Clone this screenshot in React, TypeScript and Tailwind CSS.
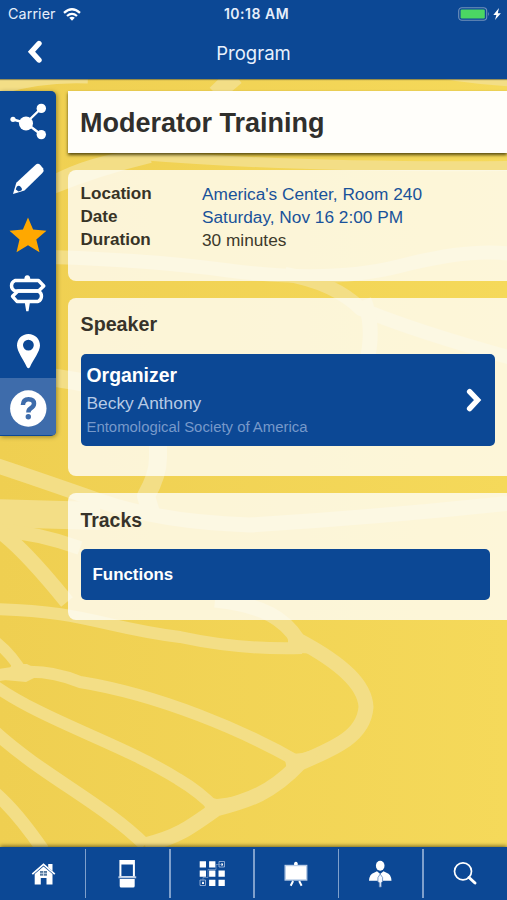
import type { ReactNode } from "react";

const details = [
  { label: "Location", value: "America's Center, Room 240", link: true },
  { label: "Date", value: "Saturday, Nov 16 2:00 PM", link: true },
  { label: "Duration", value: "30 minutes", link: false },
];

function WingBackground() {
  return (
    <svg className="absolute inset-0" width="507" height="900" viewBox="0 0 507 900" aria-hidden="true">
      <defs>
        <linearGradient id="gold" x1="0" y1="0" x2="1" y2="0">
          <stop offset="0" stopColor="#efcf51" />
          <stop offset="1" stopColor="#f5d95a" />
        </linearGradient>
      </defs>
      <rect width="507" height="900" fill="url(#gold)" />
      <g fill="none" stroke="#f3de86" strokeLinejoin="round">
        {/* upper wing */}
        <path d="M-5 88 Q40 74 88 76" strokeWidth="15" />
        <path d="M216 94 Q226 84 236 76" strokeWidth="18" />
        <path d="M415 70 Q460 80 512 83" strokeWidth="7" />
        <path d="M50 182 Q90 160 140 155 Q300 168 512 166" strokeWidth="10" />
        <path d="M50 188 Q100 168 150 156" strokeWidth="14" />
        <path d="M50 257 Q150 260 225 270 Q330 284 400 266 T512 254" strokeWidth="14" />
        <path d="M285 274 Q335 283 361 309 Q420 333 512 358" strokeWidth="14" />
        <path d="M364 300 Q374 325 368 356" strokeWidth="15" />
        <path d="M50 377 Q100 384 158 400" strokeWidth="18" />
        <path d="M158 400 V458 Q158 475 146 496 L152 516" strokeWidth="18" />
        {/* lower wing */}
        <path d="M-5 465 Q40 480 100 501 Q160 522 250 525 Q380 517 512 503" strokeWidth="15" />
        <path d="M-5 513 L100 516" strokeWidth="28" />
        <path d="M-5 530 Q35 532 80 548" strokeWidth="14" />
        <path d="M-5 528 Q20 544 67 602" strokeWidth="15" />
        <path d="M-5 609 C85 611 105 628 180 637 Q240 650 302 648" strokeWidth="12" />
        <path d="M215 600 C265 605 285 620 298 640 C345 665 365 686 366 707 C364 736 335 748 300 763 C272 793 248 801 216 809 C188 829 177 837 145 845" strokeWidth="15" />
        <path d="M-5 641 Q13 655 25 677" strokeWidth="11" />
        <path d="M-5 676 Q40 665 80 682 C160 695 245 731 300 763" strokeWidth="12" />
        <path d="M-5 686 C45 721 122 744 178 779 Q200 792 216 809" strokeWidth="12" />
        <path d="M-5 732 C42 775 104 804 145 845" strokeWidth="13" />
        <path d="M-5 793 Q17 812 43 850" strokeWidth="13" />
      </g>
      <path d="M283 755 L302 753 L322 747 L311 765 L292 774 L286 778 Q288 766 283 755 Z M200 795 L217 799 L240 796 L226 811 L203 815 Q208 807 200 795 Z M280 624 L304 640 L318 654 L282 652 Q295 642 280 624 Z M12 664 L27 664 L44 673 L26 682 L4 680 Z" fill="#f3de86" />
    </svg>
  );
}

function StatusBar() {
  return (
    <div className="grid h-[27px] grid-cols-3 items-center pr-1.5 pl-2 text-[14.3px] text-[#e6eefb]">
      <div className="flex items-center gap-[7px] pt-px">
        <span className="tracking-[0.1px]">Carrier</span>
        <svg width="18" height="13" viewBox="0 0 18 13" aria-hidden="true">
          <g fill="none" stroke="#fff" strokeWidth="2.3">
            <path d="M1 4.8 Q9 -2.2 17 4.8" />
            <path d="M4 8 Q9 3.7 14 8" />
          </g>
          <path d="M6.2 9.8 Q9 7.6 11.8 9.8 L9 12.8 Z" fill="#fff" />
        </svg>
      </div>
      <span className="pl-1 text-center text-[14px] font-semibold tracking-[0.5px]">10:18 AM</span>
      <svg className="justify-self-end" width="43" height="14" viewBox="0 0 43 14" aria-hidden="true">
        <rect x=".7" y=".7" width="28" height="12.6" rx="3.2" fill="none" stroke="#7191bb" strokeWidth="1.1" />
        <rect x="2.6" y="2.5" width="24.2" height="9" rx="1.3" fill="#4bd763" />
        <path d="M30 4.8 Q31.8 7 30 9.2 Z" fill="#7191bb" />
        <path d="M41 1 L35.3 7.9 H38.4 L37 13 L42.9 6.2 H39.8 Z" fill="#fff" />
      </svg>
    </div>
  );
}

function SideIcon({ children, active = false }: { children: ReactNode; active?: boolean }) {
  return (
    <button className={active ? "h-[57.5px] w-full bg-[#3e6cab]" : "h-[57.4px] w-full"}>
      <svg width="56" height="57" viewBox="0 0 56 57" fill="#fff" aria-hidden="true">
        {children}
      </svg>
    </button>
  );
}

function Sidebar() {
  return (
    <aside className="mt-3 flex h-[344.5px] w-14 flex-col overflow-hidden rounded-r-[5px] bg-[#0c4895] shadow-[1px_1px_4px_rgba(70,60,10,0.5)]">
      <SideIcon>
        <path d="M13 28.5 L26 32 M26 32 L41 17.5 M26 32 L41 43.5" stroke="#fff" strokeWidth="2.4" />
        <circle cx="13" cy="28.3" r="2.6" />
        <circle cx="26" cy="32.5" r="7" />
        <circle cx="41.3" cy="17.4" r="4.7" />
        <circle cx="41.3" cy="43.6" r="4.7" />
      </SideIcon>
      <SideIcon>
        <path d="M13 45 L16.3 33.8 L35.4 15.9 Q38 13.7 40.5 16.2 L43 19.2 Q44.5 21.7 42.4 24 L24.5 41.5 Z" />
        <path d="M16.6 38 Q18.6 35.8 20.8 37.9 Q22.8 40 21.3 41.6 L18.6 42.6 L15.8 40.4 Z" fill="#0c4895" />
      </SideIcon>
      <SideIcon>
        <path d="M28 11.5 L33.1 23.6 L46.5 24.8 L36.3 33.4 L39.5 46.2 L28 39.3 L16.5 46.2 L19.5 33.4 L9.5 24.8 L22.9 23.6 Z" fill="#ffa800" />
      </SideIcon>
      <SideIcon>
        <g fill="none" stroke="#fff" strokeWidth="3.4" strokeLinejoin="round">
          <path d="M15 17.5 H38.5 L43.8 23 L38.5 28 H15 Q11.5 26.5 11.5 22.8 Q11.5 19 15 17.5 Z" />
          <path d="M18 28 H38 Q41.5 29.5 41.5 33 Q41.5 37 38 38.5 H17 L12.5 33.3 Z" />
        </g>
        <path d="M24.3 16.5 Q24.3 12.2 27.3 12.2 Q30.3 12.2 30.3 16.5 Z M24.7 39 H30 L28.5 48.3 H26.2 Z" />
      </SideIcon>
      <SideIcon>
        <path fillRule="evenodd" d="M28.4 13 C35 13 40 18 40 24.5 C40 30.5 33 39 30 46 Q28.4 48.5 26.8 46 C23.8 39 17 30.5 17 24.5 C17 18 22 13 28.4 13 Z M28.4 18.7 A5.4 5.4 0 1 0 28.4 29.5 A5.4 5.4 0 1 0 28.4 18.7 Z" />
      </SideIcon>
      <SideIcon active>
        <circle cx="28.3" cy="30.5" r="18.2" />
        <path d="M22.9 27 Q23.2 21.2 28.5 21.2 Q34 21.2 34 25.6 Q34 28.4 30.8 30.2 Q28.4 31.6 28.4 34.4" fill="none" stroke="#3e6cab" strokeWidth="4.5" />
        <circle cx="28.3" cy="38.8" r="2.7" fill="#3e6cab" />
      </SideIcon>
    </aside>
  );
}

function NavItem({ children, last = false }: { children: ReactNode; last?: boolean }) {
  return (
    <button className="flex h-full w-[84.4px] shrink-0 items-center justify-between">
      <svg className="-ml-[0.8px] shrink-0" width="83" height="53" viewBox="0 0 83 53" fill="#fff" aria-hidden="true">
        {children}
      </svg>
      {!last && <span className="h-[49px] w-[1.6px] shrink-0 bg-[#7fa0cc]" />}
    </button>
  );
}

function BottomNav() {
  return (
    <nav className="relative flex h-[53.5px] bg-[#0c4895] pl-[1.8px] shadow-[0_-1px_4px_rgba(70,60,10,0.75)]">
      <NavItem>
        <path d="M31.3 27.2 L42.5 17.3 L53.8 27.2" fill="none" stroke="#fff" strokeWidth="1.7" />
        <path d="M47.2 17 H51.5 V24 L47.2 20.4 Z" />
        <path d="M33.7 27 L42.5 19.5 L51.5 27 V37.5 H45.5 V31 H39.8 V37.5 H33.7 Z" />
        <path d="M39 24 H46 V28.7 H39 Z" fill="#55799f" />
        <path d="M42.5 24 V29 M39 26.3 H46" stroke="#dce7f4" strokeWidth=".8" />
      </NavItem>
      <NavItem>
        <path fillRule="evenodd" d="M34.4 13 H49.9 V30 H34.4 Z M36.4 17.5 V29 H47.9 V17.5 Z" />
        <path d="M33.4 29.3 H51.2 V31.3 H33.4 Z" fill="#b9cce5" />
        <path d="M34.7 32 H49.7 V39 Q49.7 40.5 48.2 40.5 H36.2 Q34.7 40.5 34.7 39 Z" />
      </NavItem>
      <NavItem>
        <path d="M29.7 14.3 h6.3 v6.3 h-6.3z M39.1 14.3 h6.3 v6.3 h-6.3z M29.7 23.5 h6.3 v6.3 h-6.3z M39.1 23.5 h6.3 v6.3 h-6.3z M48.5 23.5 h6.3 v6.3 h-6.3z M39.1 32.7 h6.3 v6.3 h-6.3z M48.5 32.7 h6.3 v6.3 h-6.3z" />
        <path d="M49 14.5 h5.5 v5.5 h-5.5z M30 33 h5.5 v5.5 h-5.5z" fill="none" stroke="#aec2df" strokeWidth=".8" />
        <path d="M51 16.5 h2v2h-2z M32 35h2v2h-2z" />
        <path d="M33 35.5 V30.5 H38 V22.5 H46 V17.5 H52" fill="none" stroke="#7fa0cc" strokeWidth=".7" />
      </NavItem>
      <NavItem>
        <rect x="31.2" y="18.5" width="21.5" height="14.5" fill="#fff" stroke="#bacde7" strokeWidth="1.4" />
        <path d="M40.1 18 V16 Q41.9 13.5 43.7 16 V18 Z" />
        <path d="M39.1 34 L36.7 38.7 M45.2 34 L47.6 38.7" stroke="#fff" strokeWidth="2" />
      </NavItem>
      <NavItem>
        <ellipse cx="41.2" cy="18.7" rx="4.3" ry="5" />
        <path d="M30 33.7 Q30.5 27 35 25.8 L38 24.2 L41.2 27 L44.5 24.2 L47.5 25.8 Q52 27 52.5 33.7 Z" />
        <path d="M41.2 27 Q44.9 30.5 43.5 34.4 L42.2 35.8 V40 H40.3 V35.8 L38.9 34.4 Q37.8 30.5 41.2 27 Z" fill="#f4f8ff" stroke="#6187b9" strokeWidth=".8" />
      </NavItem>
      <NavItem last>
        <circle cx="40" cy="24.3" r="8.5" fill="none" stroke="#fff" strokeWidth="1.7" />
        <path d="M46 30.5 L52 36" stroke="#fff" strokeWidth="3" strokeLinecap="round" />
      </NavItem>
    </nav>
  );
}

export default function App() {
  return (
    <div className="relative flex h-[900px] w-[507px] flex-col overflow-hidden font-['Liberation_Sans',sans-serif] text-[#302f2c]">
      <WingBackground />

      <header className="relative h-[79px] bg-[#0c4895] font-['Inter',sans-serif] shadow-[0_1px_1px_rgba(90,90,60,0.6)]">
        <StatusBar />
        <div className="grid grid-cols-3 items-center px-[27px] pt-[10px]">
          <svg width="16" height="26" viewBox="0 0 16 26" aria-hidden="true">
            <path d="M12 5.5 L4.5 13.7 L12 22" fill="none" stroke="#fff" strokeWidth="5.4" strokeLinecap="round" />
          </svg>
          <h1 className="pt-1 text-center text-[18.5px] leading-6 text-[#e9f1fd]">Program</h1>
        </div>
      </header>

      <main className="relative flex flex-1 gap-3">
        <Sidebar />
        <div className="flex min-w-0 flex-1 flex-col pt-3">
          <section className="h-[61.5px] bg-[#fffefa] pl-3 shadow-[0_2px_3px_rgba(60,50,0,0.85)]">
            <h2 className="text-[27px] leading-[65px] font-bold whitespace-nowrap">Moderator Training</h2>
          </section>

          <section className="mt-[17px] h-[111px] rounded-l-[8px] bg-white/77 pt-[12px] pl-[12.5px]">
            {details.map((item) => (
              <div key={item.label} className="flex h-[23.2px] text-[17.1px] leading-[23px]">
                <span className="w-[121.5px] font-bold text-[#373326]">{item.label}</span>
                <span className={item.link ? "pt-[1.5px] text-[17.25px] text-[#19529a]" : "pt-[1.5px] text-[17.25px] text-[#3c392b]"}>{item.value}</span>
              </div>
            ))}
          </section>

          <section className="mt-[17px] h-[178.5px] rounded-l-[8px] bg-white/77 pt-[14px] pr-[12.5px] pl-[12.5px]">
            <h3 className="text-[19.7px] leading-6 font-bold text-[#37332a]">Speaker</h3>
            <button className="mt-[18.5px] flex h-[91.5px] w-full items-center justify-between rounded-[5px] bg-[#0c4895] pr-[12px] pl-1.5 text-left">
              <span className="flex flex-col">
                <span className="text-[19.4px] leading-[29px] font-bold text-white">Organizer</span>
                <span className="text-[17.35px] leading-[26px] text-[#b8cbe6]">Becky Anthony</span>
                <span className="text-[14.9px] leading-[22px] text-[#7799ca]">Entomological Society of America</span>
              </span>
              <svg width="18" height="26" viewBox="0 0 18 26" aria-hidden="true">
                <path d="M4.6 4.6 L12.6 13 L4.6 21.6" fill="none" stroke="#fff" strokeWidth="5.4" strokeLinecap="round" />
              </svg>
            </button>
          </section>

          <section className="mt-[17px] h-[127px] rounded-l-[8px] bg-white/77 pt-[15px] pr-[17.5px] pl-[12.5px]">
            <h3 className="text-[19.4px] leading-6 font-bold text-[#37332a]">Tracks</h3>
            <button className="mt-[17px] flex h-[50.5px] w-full items-center rounded-[5px] bg-[#0c4895] pt-px pl-3 text-[16.9px] font-bold text-white">
              Functions
            </button>
          </section>
        </div>
      </main>

      <BottomNav />
    </div>
  );
}
